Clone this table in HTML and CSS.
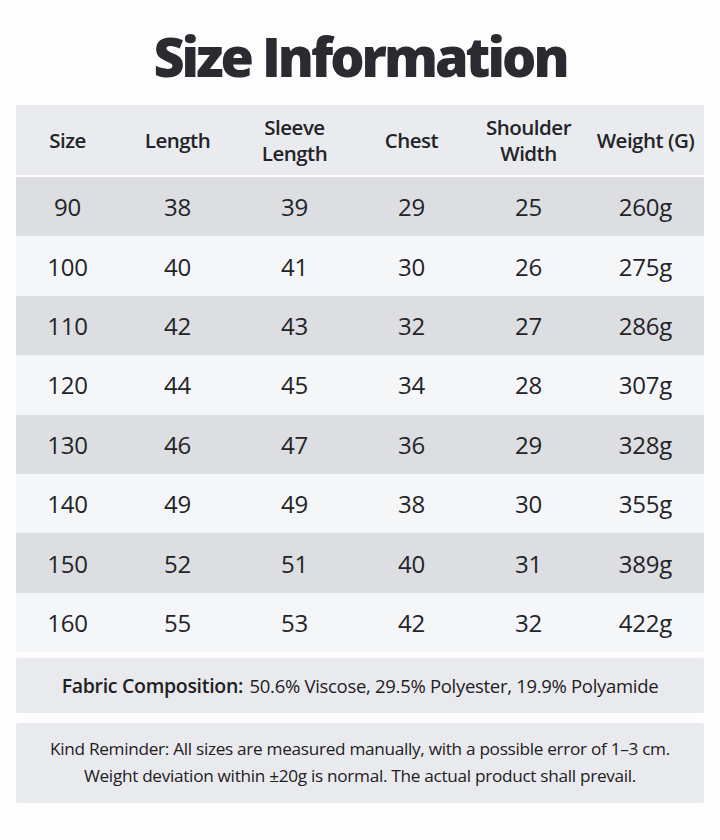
FILE: index.html
```html
<!DOCTYPE html>
<html>
<head>
<meta charset="utf-8">
<link rel="stylesheet" href="styles.css">
</head>
<body>
<div class="page">
  <h1 class="title">Size Information</h1>
  <div class="table">
    <div class="row head">
      <div class="cell">Size</div>
      <div class="cell">Length</div>
      <div class="cell">Sleeve<br>Length</div>
      <div class="cell">Chest</div>
      <div class="cell">Shoulder<br>Width</div>
      <div class="cell">Weight (G)</div>
    </div>
    <div class="row dark"><div class="cell">90</div><div class="cell">38</div><div class="cell">39</div><div class="cell">29</div><div class="cell">25</div><div class="cell">260g</div></div>
    <div class="row light"><div class="cell">100</div><div class="cell">40</div><div class="cell">41</div><div class="cell">30</div><div class="cell">26</div><div class="cell">275g</div></div>
    <div class="row dark"><div class="cell">110</div><div class="cell">42</div><div class="cell">43</div><div class="cell">32</div><div class="cell">27</div><div class="cell">286g</div></div>
    <div class="row light"><div class="cell">120</div><div class="cell">44</div><div class="cell">45</div><div class="cell">34</div><div class="cell">28</div><div class="cell">307g</div></div>
    <div class="row dark"><div class="cell">130</div><div class="cell">46</div><div class="cell">47</div><div class="cell">36</div><div class="cell">29</div><div class="cell">328g</div></div>
    <div class="row light"><div class="cell">140</div><div class="cell">49</div><div class="cell">49</div><div class="cell">38</div><div class="cell">30</div><div class="cell">355g</div></div>
    <div class="row dark"><div class="cell">150</div><div class="cell">52</div><div class="cell">51</div><div class="cell">40</div><div class="cell">31</div><div class="cell">389g</div></div>
    <div class="row light"><div class="cell">160</div><div class="cell">55</div><div class="cell">53</div><div class="cell">42</div><div class="cell">32</div><div class="cell">422g</div></div>
  </div>
  <div class="box fabric"><span class="label">Fabric Composition:</span> 50.6% Viscose, 29.5% Polyester, 19.9% Polyamide</div>
  <div class="box reminder">Kind Reminder: All sizes are measured manually, with a possible error of 1–3 cm.<br>Weight deviation within ±20g is normal. The actual product shall prevail.</div>
</div>
</body>
</html>
```
FILE: styles.css
```css
* { box-sizing: border-box; }
html, body { margin: 0; padding: 0; }
body {
  background: #fdfdfd;
  font-family: "Open Sans", "Noto Sans", sans-serif;
  color: #232428;
  width: 720px;
  height: 840px;
  overflow: hidden;
}
.page {
  padding: 18px 16px 0 16px;
  display: flex;
  flex-direction: column;
}
.title {
  margin: 0;
  height: 87px;
  text-align: center;
  font-size: 54px;
  font-weight: 800;
  line-height: 76px;
  letter-spacing: -3px;
  color: #2a2b30;
}
.table {
  display: flex;
  flex-direction: column;
}
.row {
  display: grid;
  grid-template-columns: 103px repeat(5, 117px);
  align-items: center;
  height: 59.4px;
}
.row .cell {
  text-align: center;
  font-size: 24px;
  letter-spacing: -0.2px;
}
.head {
  height: 70px;
  background: #e9ebee;
  margin-bottom: 2px;
}
.head .cell {
  font-size: 20.5px;
  font-weight: 600;
  line-height: 26px;
  letter-spacing: -0.5px;
}
.dark { background: #dcdee2; }
.light { background: #f5f6f8; }
.box {
  background: #e8eaed;
  border-radius: 3px;
  text-align: center;
  color: #1f2024;
}
.fabric {
  margin-top: 6px;
  height: 55px;
  line-height: 55px;
  font-size: 18.5px;
  letter-spacing: -0.3px;
}
.fabric .label {
  font-weight: 600;
  font-size: 19.5px;
  margin-right: 2px;
}
.reminder {
  margin-top: 10px;
  height: 80px;
  padding-top: 12px;
  font-size: 17.2px;
  line-height: 27px;
  letter-spacing: -0.3px;
}
```
